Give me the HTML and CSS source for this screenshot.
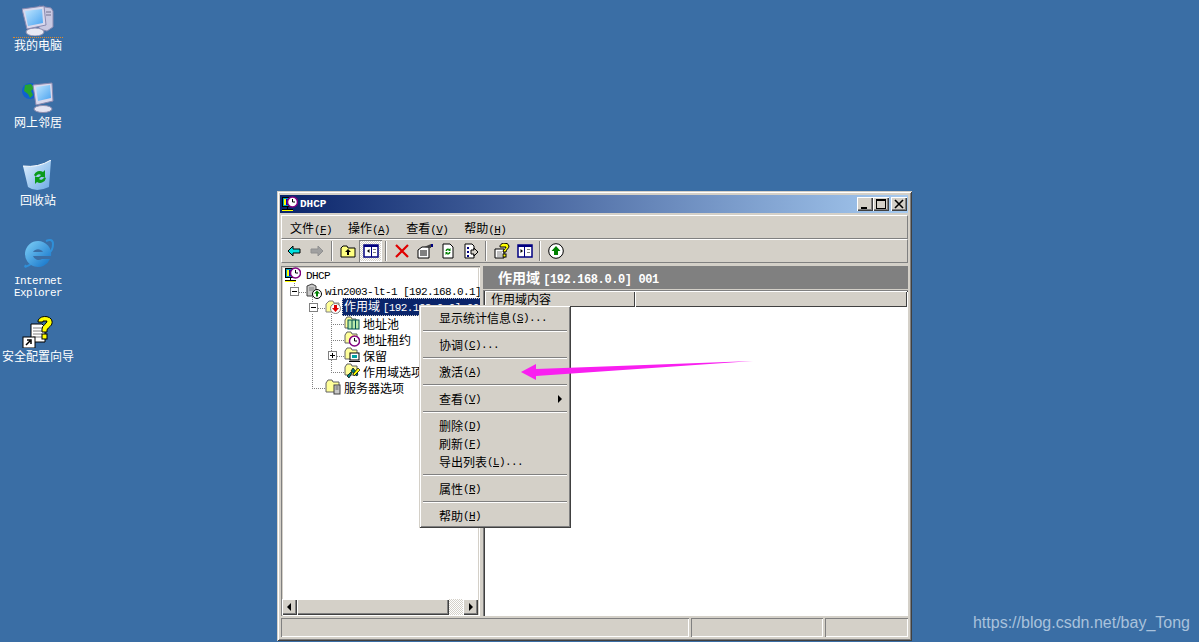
FILE: index.html
```html
<!DOCTYPE html>
<html lang="zh-CN">

<head>
    <meta charset="UTF-8">
    <title>DHCP</title>
    <link rel="stylesheet" href="styles.css">
</head>

<body>
    <svg class="defs" width="0" height="0">
        <defs>
            <linearGradient id="screen" x1="0" y1="0" x2="1" y2="1">
                <stop offset="0" stop-color="#bfe6ff" />
                <stop offset="1" stop-color="#4aa3f0" />
            </linearGradient>
            <linearGradient id="bin" x1="0" y1="0" x2="1" y2="1">
                <stop offset="0" stop-color="#e4f2ff" />
                <stop offset="1" stop-color="#6aa9e4" />
            </linearGradient>
            <linearGradient id="ieblue" x1="0" y1="0" x2="1" y2="1">
                <stop offset="0" stop-color="#7fd0f7" />
                <stop offset="1" stop-color="#0f70c8" />
            </linearGradient>

            <symbol id="dhcp" viewBox="0 0 16 16">
                <rect x=".5" y="1.500" width="10" height="9" fill="#00a0c0" stroke="#000" />
                <rect x="2" y="3" width="2" height="6" fill="#ffff00" />
                <rect x="4" y="3" width="3" height="6" fill="#0000c0" />
                <path d="M5.500 11v2.500" stroke="#000" fill="none" />
                <path d="M0 13.500h11" stroke="#000" />
                <path d="M0 14.500h11" stroke="#ffff00" />
                <circle cx="10.500" cy="6" r="5" fill="#fff" stroke="#800080" stroke-width="1.500" />
                <path d="M10.500 3v3h2.500" stroke="#000" fill="none" />
            </symbol>
            <symbol id="server" viewBox="0 0 16 16">
                <path d="M1 3l5-2 4 2v10H1z" fill="#c8c8c8" stroke="#404040" />
                <path d="M3 5h5M3 7h5" stroke="#808080" />
                <circle cx="11" cy="11" r="4.500" fill="#fff" stroke="#000" />
                <path d="M11 7.500l3 3h-2v3h-2v-3H8z" fill="#008000" />
            </symbol>
            <symbol id="scope" viewBox="0 0 16 16">
                <path d="M1 5l3-3h4l1 2h5v9H1z" fill="#ffff99" stroke="#808080" />
                <circle cx="10.500" cy="9.500" r="5" fill="#fff" stroke="#808080" />
                <path d="M9 6h3v3h2l-3.500 4L7 9h2z" fill="#e00000" />
            </symbol>
            <symbol id="pool" viewBox="0 0 16 16">
                <path d="M1 5l2-3h4l1 2h4v9H1z" fill="#ffff99" stroke="#606060" />
                <rect x="4" y="5" width="11" height="9" fill="#b8e8a8" stroke="#005050" />
                <path d="M8 5v9M11.500 5v9" stroke="#005050" />
            </symbol>
            <symbol id="lease" viewBox="0 0 16 16">
                <path d="M1 4l2-3h4l1 2h5v9H1z" fill="#ffff99" stroke="#606060" />
                <circle cx="10.500" cy="10" r="5" fill="#fff" stroke="#800080" stroke-width="1.500" />
                <path d="M10.500 7v3h2.500" stroke="#000" fill="none" />
            </symbol>
            <symbol id="reserve" viewBox="0 0 16 16">
                <path d="M1 4l2-3h4l1 2h5v9H1z" fill="#ffff99" stroke="#606060" />
                <rect x="6" y="6" width="9" height="7" fill="#fff" stroke="#000" />
                <rect x="8" y="8" width="5" height="3" fill="#00a0a0" />
                <path d="M5 14.500h11" stroke="#000" />
            </symbol>
            <symbol id="options" viewBox="0 0 16 16">
                <path d="M1 4l2-3h4l1 2h5v9H1z" fill="#ffff99" stroke="#606060" />
                <path d="M3 13l4-4 1 1-3 5z" fill="#008080" stroke="#000" stroke-width=".7" />
                <path d="M9 5l5 6-1 2-6-5z" fill="#008080" stroke="#000" stroke-width=".7" />
                <path d="M14 5l-5 6 1 2 6-6z" fill="#ffff00" stroke="#000" stroke-width=".7" />
            </symbol>
            <symbol id="srvopt" viewBox="0 0 16 16">
                <path d="M1 4l2-3h4l1 2h6v10H1z" fill="#ffff99" stroke="#606060" />
                <rect x="9" y="6" width="6" height="9" fill="#c8c8c8" stroke="#404040" />
                <path d="M10.500 8h3M10.500 10h3" stroke="#606060" />
            </symbol>

            <symbol id="minus" viewBox="0 0 9 9">
                <path d="M2 4.500h5" stroke="#000" />
            </symbol>
            <symbol id="plus" viewBox="0 0 9 9">
                <path d="M2 4.500h5M4.500 2v5" stroke="#000" />
            </symbol>
        </defs>
    </svg>

    <div class="desktopIcons">
        <div class="deskItem">
            <svg class="ico32" viewBox="0 0 32 32">
                <path d="M17 2l12 2 2 3v16l-6 4-8-2z" fill="#c9c9e2" stroke="#8a8ab0" />
                <path d="M24 8h5M24 11h5" stroke="#70708f" />
                <ellipse cx="13" cy="28" rx="9" ry="4" fill="#e8e8f4" stroke="#8f8fb0" />
                <path d="M0 5l22-3 2 19-19 4z" fill="#d8d8ec" stroke="#8a8ab0" />
                <path d="M3 7l17-2 1 14-15 3z" fill="url(#screen)" />
            </svg>
            <div class="deskLabel first">我的电脑</div>
        </div>
        <div class="deskItem">
            <svg class="ico32" viewBox="0 0 32 32">
                <circle cx="8" cy="9" r="8" fill="#1060d0" />
                <path d="M3 3l6-1 3 4-3 3 2 4-3 3-2-4-4-3z" fill="#27a52f" />
                <ellipse cx="21" cy="27" rx="9" ry="3.500" fill="#e4e4f2" stroke="#8f8fb0" />
                <path d="M11 3l19-2 1 18-17 4z" fill="#d8d8ec" stroke="#8a8ab0" />
                <path d="M14 5l14-2 1 13-13 3z" fill="url(#screen)" />
            </svg>
            <div class="deskLabel">网上邻居</div>
        </div>
        <div class="deskItem">
            <svg class="ico32" viewBox="0 0 32 32">
                <path d="M1 6Q16 8 29 0l-2 27Q14 33 6 27z" fill="url(#bin)" />
                <path d="M1 6Q16 8 29 0" stroke="#fff" fill="none" />
                <path d="M12 15a6 6 0 0 1 9-3l2-2v7h-6l2-2a3 3 0 0 0-5 2zM24 18a6 6 0 0 1-9 4l-2 2v-7h6l-2 2a3 3 0 0 0 5-2z" fill="#0a9a1a" />
            </svg>
            <div class="deskLabel">回收站</div>
        </div>
        <div class="deskItem">
            <svg class="ico32" viewBox="0 0 32 32">
                <path d="M4 27Q1 31 9 26M24 3q7-3 7 3t-4 9" fill="none" stroke="#2f8fd8" stroke-width="2" />
                <path d="M16 3a13 13 0 1 0 12 18h-8a6 6 0 0 1-9-3h18a13 13 0 0 0-13-15zm-5 11a6 6 0 0 1 10 0z" fill="url(#ieblue)" fill-rule="evenodd" />
            </svg>
            <div class="deskLabel lat ie">Internet<br>Explorer</div>
        </div>
        <div class="deskItem">
            <svg class="ico32" viewBox="0 0 32 32">
                <path d="M9 8h11l3 3v15H9z" fill="#fff" stroke="#000" />
                <path d="M11 12h9M11 15h9M11 18h9M11 21h9" stroke="#808080" />
                <path d="M16 6a7 5 0 0 1 14-1c1 5-4 6-5 9v2h-5v-3c0-4 5-5 5-8h-4v1z" fill="#ffff00" stroke="#000" />
                <rect x="20" y="18" width="5" height="5" fill="#ffff00" stroke="#000" />
                <rect x="1" y="21" width="12" height="11" fill="#fff" stroke="#000" />
                <path d="M4 29l4-4M5 24h4v4" stroke="#000" stroke-width="1.500" fill="none" />
            </svg>
            <div class="deskLabel">安全配置向导</div>
        </div>
    </div>

    <div class="window">
        <div class="titleBar">
            <svg class="ico16"><use href="#dhcp" /></svg>
            <span class="titleText">DHCP</span>
            <div class="winBtns">
                <div class="winBtn"><svg viewBox="0 0 16 14"><path d="M4 10h6v2H4z" /></svg></div>
                <div class="winBtn"><svg viewBox="0 0 16 14"><path d="M3 2h10v10H3zM4 4v7h8V4z" fill-rule="evenodd" /></svg></div>
                <div class="winBtn closeBtn"><svg viewBox="0 0 16 14"><path d="M4 3l8 8M12 3l-8 8" stroke="#000" stroke-width="1.600" /></svg></div>
            </div>
        </div>

        <div class="bar menuBar">
            <span class="menuOpt">文件<span class="lat">(<u>F</u>)</span></span>
            <span class="menuOpt">操作<span class="lat">(<u>A</u>)</span></span>
            <span class="menuOpt">查看<span class="lat">(<u>V</u>)</span></span>
            <span class="menuOpt">帮助<span class="lat">(<u>H</u>)</span></span>
        </div>

        <div class="bar toolBar">
            <div class="toolBtn">
                <svg class="ico16" viewBox="0 0 16 16"><path d="M2 8l5-5v3h7v4H7v3z" fill="#00e0e0" stroke="#000" /></svg>
            </div>
            <div class="toolBtn">
                <svg class="ico16" viewBox="0 0 16 16"><path d="M14 8L9 3v3H2v4h7v3z" fill="#a0a0a0" stroke="#909090" /></svg>
            </div>
            <div class="toolSep"></div>
            <div class="toolBtn">
                <svg class="ico16" viewBox="0 0 16 16"><path d="M1 5l2-2h4l1 2h7v9H1z" fill="#ffff80" stroke="#000" /><path d="M8 6l3 3H9v3H7V9H5z" fill="#000" /></svg>
            </div>
            <div class="toolBtn active">
                <svg class="ico16" viewBox="0 0 16 16"><rect x="1" y="2" width="14" height="12" fill="#fff" stroke="#000080" stroke-width="1.500" /><path d="M1 2h14v2H1zM8 2h1v12H8z" fill="#000080" /><path d="M6.500 6v4L4 8z" fill="#000" /><rect x="10" y="6" width="3" height="1" fill="#808080" /><rect x="10" y="9" width="3" height="1" fill="#808080" /></svg>
            </div>
            <div class="toolSep"></div>
            <div class="toolBtn">
                <svg class="ico16" viewBox="0 0 16 16"><path d="M2 2l12 12M14 2L2 14" stroke="#e00000" stroke-width="2.200" /></svg>
            </div>
            <div class="toolBtn">
                <svg class="ico16" viewBox="0 0 16 16"><path d="M1 7l4-3h7v11H1z" fill="#fff" stroke="#000" /><path d="M3 8h7M3 10h7M3 12h7" stroke="#000" /><path d="M7 4l7-3v4z" fill="#404040" /><rect x="14" y="1" width="2" height="3" fill="#000080" /></svg>
            </div>
            <div class="toolBtn">
                <svg class="ico16" viewBox="0 0 16 16"><path d="M3 1h7l3 3v11H3z" fill="#fff" stroke="#000" /><path d="M5.500 8a2.500 2.500 0 0 1 4-2l1-1v3H8l1-1a1.500 1.500 0 0 0-2 1zM10.500 9a2.500 2.500 0 0 1-4 2l-1 1V9H8l-1 1a1.500 1.500 0 0 0 2-1z" fill="#008000" /></svg>
            </div>
            <div class="toolBtn">
                <svg class="ico16" viewBox="0 0 16 16"><path d="M2 1h7l2 2v12H2z" fill="#fff" stroke="#000" /><path d="M4 4h2v2H4zM4 8h2v2H4zM4 12h2v2H4z" fill="#000080" /><path d="M8 7h3V5l4 4-4 4v-2H8z" fill="#d4d0c8" stroke="#000" /></svg>
            </div>
            <div class="toolSep"></div>
            <div class="toolBtn">
                <svg class="ico16" viewBox="0 0 16 16"><path d="M1 6h9v9H1z" fill="#fff" stroke="#000" /><path d="M3 9h5M3 11h5M3 13h5" stroke="#808080" /><path d="M6 4a4 3 0 0 1 9-1c0 3-3 3-3 6H9c0-3 3-3 3-5H9z" fill="#ffff00" stroke="#000" /><rect x="9" y="11" width="3" height="3" fill="#ffff00" stroke="#000" /></svg>
            </div>
            <div class="toolBtn">
                <svg class="ico16" viewBox="0 0 16 16"><rect x="1" y="2" width="14" height="12" fill="#fff" stroke="#000080" stroke-width="1.500" /><path d="M1 2h14v2H1zM7 2h1v12H7z" fill="#000080" /><path d="M3.500 6v4L6 8z" fill="#000" /><rect x="10" y="6" width="3" height="1" fill="#808080" /><rect x="10" y="9" width="3" height="1" fill="#808080" /></svg>
            </div>
            <div class="toolSep"></div>
            <div class="toolBtn">
                <svg class="ico16" viewBox="0 0 16 16"><circle cx="8" cy="8" r="7.300" fill="#fff" stroke="#000" /><path d="M8 3l4.500 5H10v4H6V8H3.500z" fill="#008000" /></svg>
            </div>
        </div>

        <div class="panes">
            <div class="treePane">
                <svg class="treeLines" viewBox="0 0 198 140">
                    <g transform="translate(-281 -266)" stroke="#808080" stroke-dasharray="1 1" fill="none">
                        <path d="M294.500 281v7M299 292.500h7M312.500 297v7M318 308.500h7M312.500 314v75M312 388.500h13" />
                        <path d="M331.500 314v59M331 324.500h13M331 340.500h13M337 356.500h7M331 372.500h13" />
                    </g>
                </svg>
                <div class="treeRow lv0"><svg class="ico16"><use href="#dhcp" /></svg><span class="treeText lat">DHCP</span></div>
                <div class="treeRow lv1"><span class="twist"><svg viewBox="0 0 9 9"><use href="#minus" /></svg></span><svg class="ico16"><use href="#server" /></svg><span class="treeText lat">win2003-lt-1 [192.168.0.1]</span></div>
                <div class="treeRow lv2"><span class="twist"><svg viewBox="0 0 9 9"><use href="#minus" /></svg></span><svg class="ico16"><use href="#scope" /></svg><span class="treeText selected">作用域 <span class="lat">[192.168.0.0] 001</span></span></div>
                <div class="treeRow lv3"><span class="twist none"></span><svg class="ico16"><use href="#pool" /></svg><span class="treeText">地址池</span></div>
                <div class="treeRow lv3"><span class="twist none"></span><svg class="ico16"><use href="#lease" /></svg><span class="treeText">地址租约</span></div>
                <div class="treeRow lv3"><span class="twist"><svg viewBox="0 0 9 9"><use href="#plus" /></svg></span><svg class="ico16"><use href="#reserve" /></svg><span class="treeText">保留</span></div>
                <div class="treeRow lv3"><span class="twist none"></span><svg class="ico16"><use href="#options" /></svg><span class="treeText">作用域选项</span></div>
                <div class="treeRow lv2"><span class="twist none"></span><svg class="ico16"><use href="#srvopt" /></svg><span class="treeText">服务器选项</span></div>

                <div class="hScroll">
                    <div class="scrollBtn"><svg viewBox="0 0 15 16"><path d="M9 4v8L5 8z" /></svg></div>
                    <div class="scrollThumb"></div>
                    <div class="scrollTrack"></div>
                    <div class="scrollBtn"><svg viewBox="0 0 15 16"><path d="M6 4v8l4-4z" /></svg></div>
                </div>
            </div>

            <div class="rightPane">
                <div class="scopeHead">作用域 <span class="lat">[192.168.0.0] 001</span></div>
                <div class="listView">
                    <div class="colHeads">
                        <div class="colHead first">作用域内容</div>
                        <div class="colHead rest"></div>
                    </div>
                    <div class="listBody"></div>
                </div>
            </div>
        </div>

        <div class="statusBar">
            <div class="statusCell one"></div>
            <div class="statusCell two"></div>
            <div class="statusCell three"></div>
        </div>
    </div>

    <div class="ctxMenu">
        <div class="ctxItem">显示统计信息<span class="lat">(<u>S</u>)...</span></div>
        <div class="ctxSep"></div>
        <div class="ctxItem">协调<span class="lat">(<u>C</u>)...</span></div>
        <div class="ctxSep"></div>
        <div class="ctxItem">激活<span class="lat">(<u>A</u>)</span></div>
        <div class="ctxSep"></div>
        <div class="ctxItem">查看<span class="lat">(<u>V</u>)</span><span class="subArrow"></span></div>
        <div class="ctxSep"></div>
        <div class="ctxItem">删除<span class="lat">(<u>D</u>)</span></div>
        <div class="ctxItem">刷新<span class="lat">(<u>F</u>)</span></div>
        <div class="ctxItem">导出列表<span class="lat">(<u>L</u>)...</span></div>
        <div class="ctxSep"></div>
        <div class="ctxItem">属性<span class="lat">(<u>R</u>)</span></div>
        <div class="ctxSep"></div>
        <div class="ctxItem">帮助<span class="lat">(<u>H</u>)</span></div>
    </div>

    <svg class="pinkArrow" viewBox="0 0 240 24">
        <path d="M0 12L15 4v5L232 1 15 16v4z" fill="#f91ff0" />
    </svg>

    <div class="watermark">https://blog.csdn.net/bay_Tong</div>
</body>

</html>
```

FILE: styles.css
```css
* {
    margin: 0px;
    padding: 0px;
    box-sizing: border-box;
}

html,
body {
    width: 1199px;
    height: 642px;
    overflow: hidden;
}

body {
    position: relative;
    background-color: #3a6ea5;
    font-family: "Noto Sans CJK SC", "Liberation Sans", sans-serif;
    font-size: 12px;
    color: black;
}

u {
    text-decoration: underline;
}

.defs {
    position: absolute;
}

.lat {
    font-family: "Liberation Mono", monospace;
    font-size: 11px;
    letter-spacing: -0.6px;
}

.ico16 {
    width: 16px;
    height: 16px;
    flex: none;
    display: block;
}

.ico32 {
    width: 32px;
    height: 32px;
    display: block;
}

/* desktop */
.desktopIcons {
    width: 76px;
    display: flex;
    flex-direction: column;
}

.deskItem {
    height: 78px;
    padding-top: 4px;
    display: flex;
    flex-direction: column;
    align-items: center;
}

.deskLabel {
    color: white;
    height: 16px;
    line-height: 16px;
    white-space: nowrap;
    text-align: center;
}

.deskLabel.first {
    border-top: 1px dotted #e08a2a;
    margin-top: 1px;
    line-height: 14px;
    padding: 0 1px;
}

.deskLabel.ie {
    line-height: 12px;
    height: 24px;
    margin-top: 5px;
}

/* window */
.window {
    position: absolute;
    left: 277px;
    top: 191px;
    width: 635px;
    height: 450px;
    padding: 4px 4px 4px 3px;
    background-color: #d4d0c8;
    box-shadow: inset 1px 1px 0 #d4d0c8, inset -1px -1px 0 #404040, inset 2px 2px 0 white, inset -2px -2px 0 #808080;
}

.titleBar {
    height: 18px;
    display: flex;
    align-items: center;
    padding: 0 1px 0 2px;
    background: linear-gradient(to right, #0a246a, #a6caf0);
}

.titleText {
    color: white;
    font-family: "Liberation Mono", monospace;
    font-size: 11px;
    font-weight: bold;
    margin-left: 2px;
}

.winBtns {
    margin-left: auto;
    display: flex;
}

.winBtn {
    width: 16px;
    height: 14px;
    background-color: #d4d0c8;
    box-shadow: inset 1px 1px 0 white, inset -1px -1px 0 #404040, inset -2px -2px 0 #808080;
}

.winBtn svg {
    display: block;
    width: 16px;
    height: 14px;
}

.closeBtn {
    margin-left: 2px;
}

.bar {
    height: 24px;
    margin-left: 1px;
    display: flex;
    align-items: center;
    border-top: 1px solid white;
    border-left: 1px solid white;
    border-bottom: 1px solid #808080;
    border-right: 1px solid #808080;
}

.menuBar {
    margin-top: 2px;
}

.menuOpt {
    padding: 0 8px;
    white-space: nowrap;
}

.toolBtn {
    width: 23px;
    height: 22px;
    display: flex;
    align-items: center;
    justify-content: center;
    flex: none;
}

.toolBtn.active {
    background: conic-gradient(white 25%, #d4d0c8 0 50%, white 0 75%, #d4d0c8 0) 0 0 / 2px 2px;
    box-shadow: inset 1px 1px 0 #808080, inset -1px -1px 0 white;
}

.toolSep {
    width: 8px;
    height: 20px;
    flex: none;
    background: linear-gradient(#808080, #808080) 3px 0 / 1px 100% no-repeat, linear-gradient(white, white) 4px 0 / 1px 100% no-repeat;
}

/* panes */
.panes {
    height: 350px;
    margin-top: 3px;
    margin-left: 1px;
    display: flex;
}

.treePane {
    width: 199px;
    position: relative;
    overflow: hidden;
    padding-top: 1px;
    display: flex;
    flex-direction: column;
    background-color: white;
    box-shadow: inset 1px 1px 0 #808080, inset 2px 2px 0 #d4d0c8, inset -1px -1px 0 white, inset -2px -2px 0 #d4d0c8;
}

.treeLines {
    position: absolute;
    left: 0;
    top: 0;
    width: 198px;
    height: 140px;
}

.treeRow {
    height: 16px;
    flex: none;
    display: flex;
    align-items: center;
    white-space: nowrap;
    position: relative;
}

.lv0 {
    padding-left: 4px;
}

.lv0 .treeText {
    margin-left: 5px;
}

.lv1 {
    padding-left: 9px;
}

.lv2 {
    padding-left: 28px;
}

.lv3 {
    padding-left: 47px;
}

.twist {
    width: 9px;
    height: 9px;
    margin-right: 7px;
    flex: none;
    background-color: white;
    border: 1px solid #808080;
    display: block;
}

.twist svg {
    display: block;
    width: 9px;
    height: 9px;
    margin: -1px;
}

.twist.none {
    visibility: hidden;
}

.treeText {
    margin-left: 3px;
}

.treeText.lat {
    padding-top: 2px;
}

.treeText.selected {
    margin-left: 1px;
    padding: 0 2px;
    line-height: 15px;
    background-color: #0a246a;
    color: white;
    outline: 1px dotted #d4d0c8;
    outline-offset: -1px;
}

.hScroll {
    margin: auto 2px 1px 1px;
    height: 16px;
    display: flex;
    flex: none;
    position: relative;
}

.scrollBtn {
    width: 15px;
    height: 16px;
    flex: none;
    background-color: #d4d0c8;
    box-shadow: inset 1px 1px 0 white, inset -1px -1px 0 #404040, inset -2px -2px 0 #808080;
}

.scrollBtn svg {
    display: block;
    width: 15px;
    height: 16px;
}

.scrollThumb {
    width: 152px;
    flex: none;
    background-color: #d4d0c8;
    box-shadow: inset 1px 1px 0 white, inset -1px -1px 0 #404040, inset -2px -2px 0 #808080;
}

.scrollTrack {
    flex: 1;
    background: conic-gradient(white 25%, #d4d0c8 0 50%, white 0 75%, #d4d0c8 0) 0 0 / 2px 2px;
}

.rightPane {
    width: 425px;
    margin-left: 3px;
    display: flex;
    flex-direction: column;
}

.scopeHead {
    height: 23px;
    line-height: 23px;
    flex: none;
    padding-left: 15px;
    background-color: #808080;
    color: white;
    font-size: 14px;
    font-weight: bold;
    white-space: nowrap;
}

.scopeHead .lat {
    font-size: 12px;
    letter-spacing: -0.4px;
}

.listView {
    flex: 1;
    margin-top: 1px;
    display: flex;
    flex-direction: column;
    padding: 1px 1px 1px 2px;
    box-shadow: inset 1px 1px 0 #808080, inset 2px 2px 0 #404040, inset -1px -1px 0 white;
}

.colHeads {
    height: 16px;
    flex: none;
    display: flex;
}

.colHead {
    height: 16px;
    line-height: 15px;
    background-color: #d4d0c8;
    box-shadow: inset 1px 1px 0 white, inset -1px -1px 0 #404040;
    padding-left: 6px;
}

.colHead.first {
    width: 150px;
}

.colHead.rest {
    flex: 1;
}

.listBody {
    flex: 1;
    background-color: white;
}

.statusBar {
    height: 19px;
    margin-top: 2px;
    margin-left: 1px;
    display: flex;
}

.statusCell {
    height: 19px;
    margin-right: 2px;
    box-shadow: inset 1px 1px 0 #808080, inset -1px -1px 0 white;
}

.statusCell.one {
    width: 408px;
}

.statusCell.two {
    width: 132px;
}

.statusCell.three {
    width: 83px;
    margin-right: 0;
}

/* context menu */
.ctxMenu {
    position: absolute;
    left: 419px;
    top: 305px;
    width: 152px;
    padding: 4px 3px 3px;
    background-color: #d4d0c8;
    box-shadow: inset 1px 1px 0 #d4d0c8, inset -1px -1px 0 #404040, inset 2px 2px 0 white, inset -2px -2px 0 #808080;
}

.ctxItem {
    height: 18px;
    line-height: 18px;
    padding-left: 17px;
    display: flex;
    align-items: center;
    white-space: nowrap;
}

.ctxSep {
    height: 9px;
    margin: 0 1px;
    background: linear-gradient(#808080, #808080) 0 3px / 100% 1px no-repeat, linear-gradient(white, white) 0 4px / 100% 1px no-repeat;
}

.subArrow {
    margin-left: auto;
    margin-right: 6px;
    width: 0;
    height: 0;
    border-left: 4px solid black;
    border-top: 4px solid transparent;
    border-bottom: 4px solid transparent;
}

.pinkArrow {
    position: absolute;
    left: 521px;
    top: 360px;
    width: 240px;
    height: 24px;
}

.watermark {
    position: absolute;
    right: 9px;
    top: 612px;
    font-family: "Liberation Sans", sans-serif;
    font-size: 16px;
    line-height: 22px;
    color: #a9c2dc;
    white-space: nowrap;
}
```
